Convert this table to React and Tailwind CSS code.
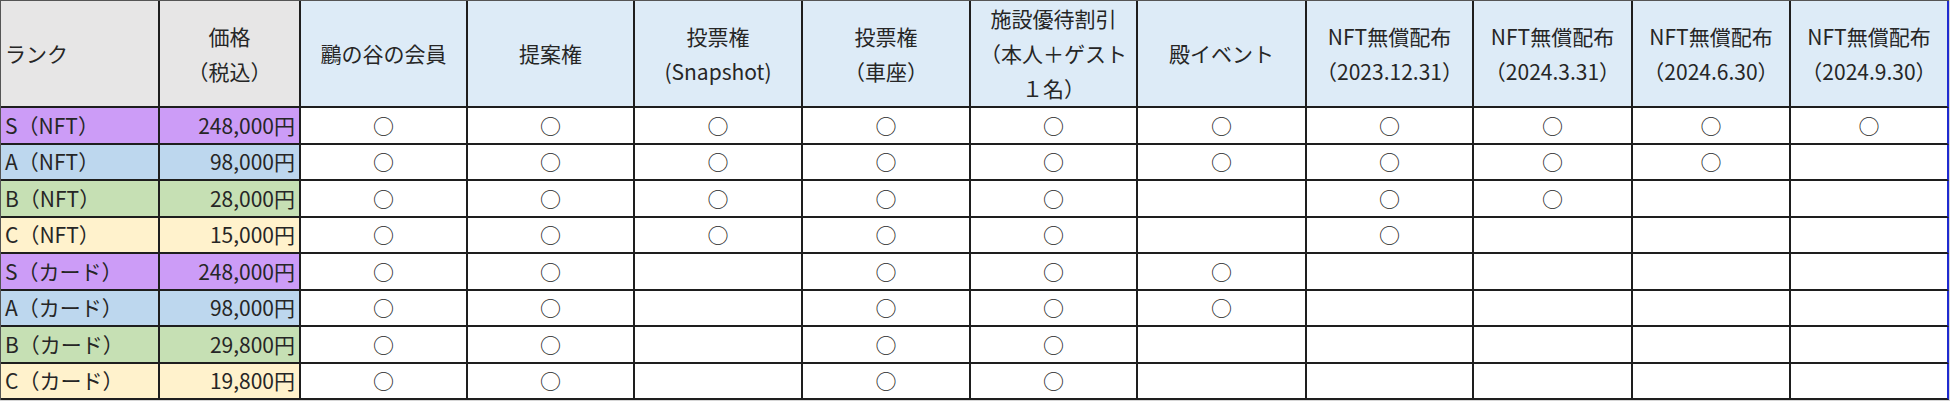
const cols = [
  '鸝の谷の会員',
  '提案権',
  ['投票権', '(Snapshot)'],
  ['投票権', '（車座）'],
  ['施設優待割引', '（本人＋ゲスト', '１名）'],
  '殿イベント',
  ['NFT無償配布', '（2023.12.31）'],
  ['NFT無償配布', '（2024.3.31）'],
  ['NFT無償配布', '（2024.6.30）'],
  ['NFT無償配布', '（2024.9.30）'],
]

const rankColors = {
  S: 'bg-[#cc9cf7]',
  A: 'bg-[#bdd7ee]',
  B: 'bg-[#c6e0b4]',
  C: 'bg-[#fff2cc]',
}

const rows = [
  ['S', 'NFT', '248,000円', '1111111111'],
  ['A', 'NFT', '98,000円', '1111111110'],
  ['B', 'NFT', '28,000円', '1111101100'],
  ['C', 'NFT', '15,000円', '1111101000'],
  ['S', 'カード', '248,000円', '1101110000'],
  ['A', 'カード', '98,000円', '1101110000'],
  ['B', 'カード', '29,800円', '1101100000'],
  ['C', 'カード', '19,800円', '1101100000'],
]

const cell = 'border-r-2 border-b-2 border-[#1e1e1e] overflow-hidden'

export default function App() {
  return (
    <div
      className="w-[1950px] h-[401px] bg-[#d6d6d6] text-[21px] text-[#262626] leading-[35px]"
      style={{ fontFamily: '"Noto Sans CJK JP", "Noto Sans", sans-serif' }}
    >
      <div className="grid grid-cols-[159px_141px_167px_167px_168px_168px_167px_169px_167px_159px_158px_158px] grid-rows-[107px_repeat(8,36.5px)] border-t border-l border-[#555] bg-white w-[1949px]">
        <div className={`${cell} bg-[#e7e6e6] flex items-center pl-1`}>ランク</div>
        <div className={`${cell} bg-[#e7e6e6] flex flex-col items-center justify-center`}>
          <span>価格</span>
          <span>（税込）</span>
        </div>
        {cols.map((c, i) => (
          <div
            key={i}
            className={`${cell} bg-[#ddebf7] flex flex-col items-center justify-center whitespace-nowrap ${i === 9 ? 'border-r-[#1f2bd0]' : ''}`}
          >
            {(Array.isArray(c) ? c : [c]).map((t, j) => (
              <span key={j}>{t}</span>
            ))}
          </div>
        ))}
        {rows.map(([rank, kind, price, marks], r) => (
          <Row key={r} rank={rank} kind={kind} price={price} marks={marks} />
        ))}
      </div>
    </div>
  )
}

function Row({ rank, kind, price, marks }) {
  const bg = rankColors[rank]
  return (
    <>
      <div className={`${cell} ${bg} flex items-center pl-1 whitespace-nowrap`}>
        {rank}（{kind}）
      </div>
      <div className={`${cell} ${bg} flex items-center justify-end pr-1`}>{price}</div>
      {marks.split('').map((m, i) => (
        <div
          key={i}
          className={`${cell} flex items-center justify-center ${i === 9 ? 'border-r-[#1f2bd0]' : ''}`}
        >
          {m === '1' ? '○' : ''}
        </div>
      ))}
    </>
  )
}
